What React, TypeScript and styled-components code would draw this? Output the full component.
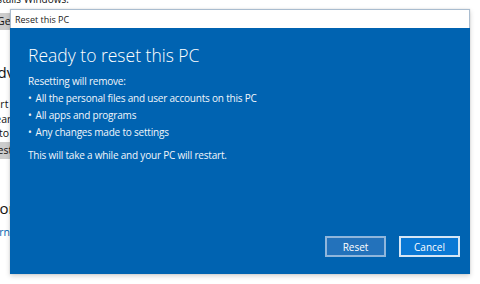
import React from "react";
import styled, { createGlobalStyle } from "styled-components";

const Global = createGlobalStyle`
  html, body { margin: 0; padding: 0; background: #ffffff; }
  body { width: 480px; height: 284px; overflow: hidden; font-family: "Open Sans", "Noto Sans", sans-serif; }
`;

const Page = styled.div`
  position: relative;
  width: 480px;
  height: 284px;
  overflow: hidden;
  background: #ffffff;
`;

const Behind = styled.div`
  display: flex;
  flex-direction: column;
  align-items: flex-start;
  margin-left: -12px;
  margin-top: -7px;
  color: #111;
`;

const Intro = styled.div`
  font-size: 10px;
  line-height: 12px;
  margin-left: -9px;
  white-space: nowrap;
`;

const GrayButton = styled.div<{ $top: number; $indent: number }>`
  margin-top: ${(p) => p.$top}px;
  margin-left: ${(p) => p.$indent}px;
  background: #cccccc;
  height: 17px;
  padding: 0 10px 0 9px;
  font-size: 10.5px;
  line-height: 17px;
  white-space: nowrap;
`;

const SectionTitle = styled.div<{ $top: number; $indent: number }>`
  margin-top: ${(p) => p.$top}px;
  margin-left: ${(p) => p.$indent}px;
  font-size: 15px;
  line-height: 18px;
  white-space: nowrap;
`;

const ParaLine = styled.div<{ $indent: number }>`
  margin-left: ${(p) => p.$indent}px;
  font-size: 10.5px;
  line-height: 14.5px;
  white-space: nowrap;
`;

const Para = styled.div`
  display: flex;
  flex-direction: column;
  margin-top: 16px;
`;

const LinkText = styled.div<{ $indent: number }>`
  margin-top: 8px;
  margin-left: ${(p) => p.$indent}px;
  font-size: 10.5px;
  line-height: 14px;
  color: #0063b1;
  white-space: nowrap;
`;

const Dialog = styled.div`
  position: absolute;
  left: 10px;
  top: 9px;
  width: 460px;
  display: flex;
  flex-direction: column;
  box-shadow: 0 2px 5px rgba(0, 0, 0, 0.18), 0 0 1px rgba(0, 0, 0, 0.2);
`;

const TitleBar = styled.div`
  height: 18px;
  background: #ffffff;
  border: 1px solid #a9bccf;
  border-bottom: none;
  display: flex;
  align-items: center;
  padding-left: 4px;
  font-size: 9px;
  color: #1a1a1a;
`;

const Body = styled.div`
  height: 246px;
  box-sizing: border-box;
  background: #0063b1;
  color: #ffffff;
  display: flex;
  flex-direction: column;
  padding: 16px 10px 17px 18px;
`;

const Heading = styled.h1`
  margin: 0;
  font-weight: 300;
  font-size: 17.5px;
  line-height: 22px;
  color: #ffffff;
`;

const Text = styled.p<{ $top: number }>`
  margin: ${(p) => p.$top}px 0 0 0;
  font-size: 10px;
  letter-spacing: -0.2px;
  line-height: 17px;
  color: #f2f6fb;
`;

const List = styled.ul`
  margin: 0;
  padding: 0;
  list-style: none;
`;

const Item = styled.li`
  display: flex;
  gap: 4px;
  font-size: 10px;
  letter-spacing: -0.2px;
  line-height: 17px;
  color: #f2f6fb;
  &::before {
    content: "•";
  }
`;

const Actions = styled.div`
  margin-top: auto;
  display: flex;
  justify-content: flex-end;
  gap: 13px;
`;

const Button = styled.button<{ $primary?: boolean }>`
  width: 61px;
  height: 21px;
  box-sizing: border-box;
  border: 2px solid ${(p) => (p.$primary ? "#d6e6f5" : "#8fb6dc")};
  background: ${(p) => (p.$primary ? "#0a78d4" : "#2372bb")};
  color: #ffffff;
  font-family: "Open Sans", "Noto Sans", sans-serif;
  font-size: 10px;
  padding: 0;
  cursor: pointer;
`;

export default function App() {
  return (
    <Page>
      <Global />
      <Behind>
        <Intro>reinstalls Windows.</Intro>
        <GrayButton $top={8} $indent={0}>Get started</GrayButton>
        <SectionTitle $top={33} $indent={0}>Advanced startup</SectionTitle>
        <Para>
          <ParaLine $indent={-3}>Start up from a device or disc (such as a USB</ParaLine>
          <ParaLine $indent={-2}>Clear your firmware settings, change Windows</ParaLine>
          <ParaLine $indent={2}>into startup settings, or restore Windows</ParaLine>
        </Para>
        <GrayButton $top={1} $indent={-6}>Restart now</GrayButton>
        <SectionTitle $top={40} $indent={-2}>More recovery options</SectionTitle>
        <LinkText $indent={-6}>Learn how to start fresh with a clean installation of Windows</LinkText>
      </Behind>
      <Dialog>
        <TitleBar>Reset this PC</TitleBar>
        <Body>
          <Heading>Ready to reset this PC</Heading>
          <Text $top={7}>Resetting will remove:</Text>
          <List>
            <Item>All the personal files and user accounts on this PC</Item>
            <Item>All apps and programs</Item>
            <Item>Any changes made to settings</Item>
          </List>
          <Text $top={6}>This will take a while and your PC will restart.</Text>
          <Actions>
            <Button>Reset</Button>
            <Button $primary>Cancel</Button>
          </Actions>
        </Body>
      </Dialog>
    </Page>
  );
}
